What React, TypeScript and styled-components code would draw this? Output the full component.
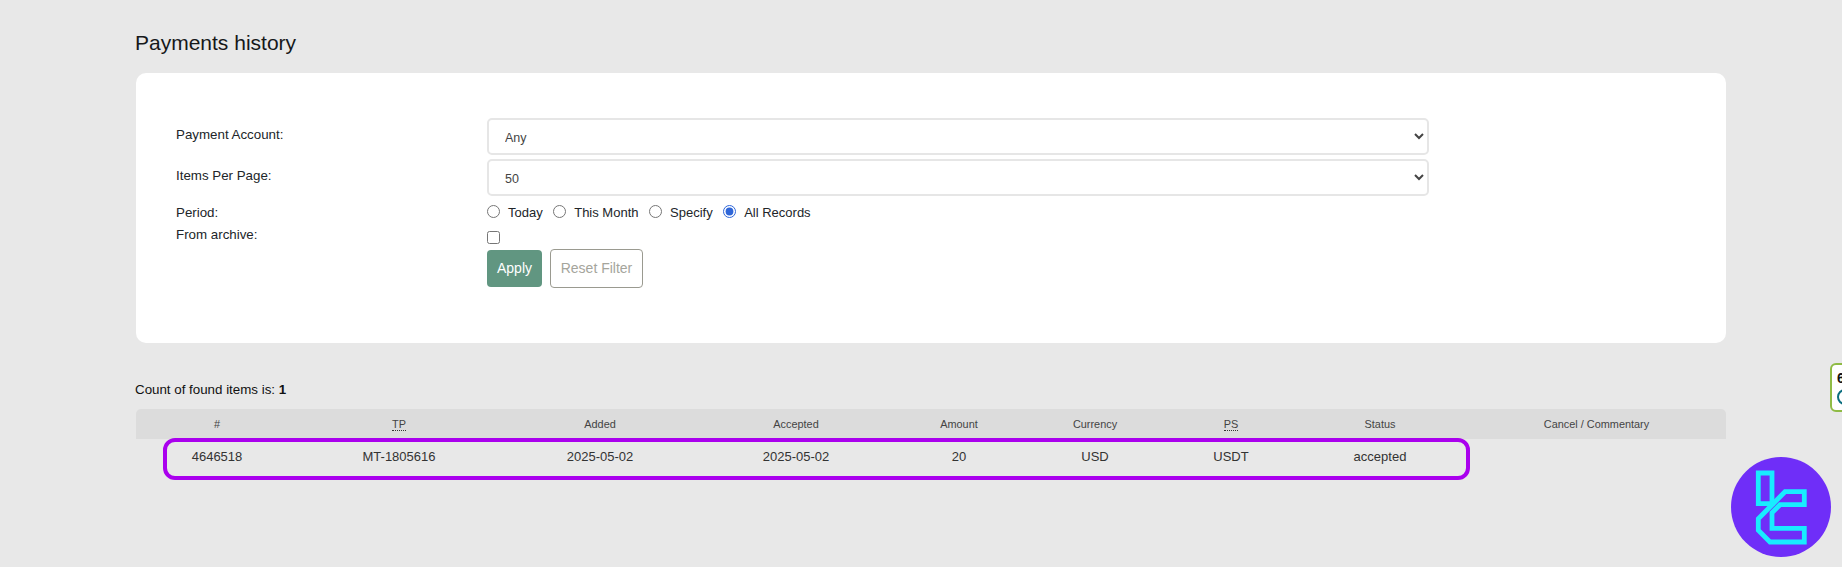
import styled, { createGlobalStyle } from 'styled-components'

const GlobalStyle = createGlobalStyle`
  html, body {
    margin: 0;
    height: 100%;
    background: #e8e8e8;
  }
  body {
    font-family: "Liberation Sans", Arial, sans-serif;
    color: #212529;
    overflow: hidden;
  }
`

const columns = [
  { title: '#', width: 162 },
  { title: 'TP', width: 202, abbr: true },
  { title: 'Added', width: 200 },
  { title: 'Accepted', width: 192 },
  { title: 'Amount', width: 134 },
  { title: 'Currency', width: 138 },
  { title: 'PS', width: 134, abbr: true },
  { title: 'Status', width: 164 },
  { title: 'Cancel / Commentary', width: 264 },
]

const row = ['4646518', 'MT-1805616', '2025-05-02', '2025-05-02', '20', 'USD', 'USDT', 'accepted', '']

const App = () => {
  return (
    <>
      <GlobalStyle />
      <Page>
        <Title>Payments history</Title>
        <Card>
          <FormRow>
            <Label>Payment Account:</Label>
            <Select defaultValue="any">
              <option value="any">Any</option>
            </Select>
          </FormRow>
          <FormRow>
            <Label>Items Per Page:</Label>
            <Select defaultValue="50">
              <option value="50">50</option>
            </Select>
          </FormRow>
          <PeriodRow>
            <Label>Period:</Label>
            <Radios>
              <RadioLabel><Radio name="period" />Today</RadioLabel>
              <RadioLabel><Radio name="period" />This Month</RadioLabel>
              <RadioLabel><Radio name="period" />Specify</RadioLabel>
              <RadioLabel><Radio name="period" defaultChecked />All Records</RadioLabel>
            </Radios>
          </PeriodRow>
          <ArchiveRow>
            <Label>From archive:</Label>
            <div>
              <Checkbox />
              <Buttons>
                <ApplyButton>Apply</ApplyButton>
                <ResetButton>Reset Filter</ResetButton>
              </Buttons>
            </div>
          </ArchiveRow>
        </Card>
        <Count>Count of found items is: <b>1</b></Count>
        <TableWrap>
          <Table>
            <colgroup>
              {columns.map((c) => (
                <col key={c.title} width={c.width} />
              ))}
            </colgroup>
            <thead>
              <tr>
                {columns.map((c) => (
                  <Th key={c.title}>{c.abbr ? <Abbr>{c.title}</Abbr> : c.title}</Th>
                ))}
              </tr>
            </thead>
            <tbody>
              <tr>
                {row.map((v, i) => (
                  <Td key={i}>{v}</Td>
                ))}
              </tr>
            </tbody>
          </Table>
          <Highlight />
        </TableWrap>
      </Page>
      <SideWidget>
        <WidgetDigit>6</WidgetDigit>
        <WidgetIcon />
      </SideWidget>
      <Logo viewBox="0 0 100 100">
        <circle cx="50" cy="50" r="50" fill="#6f2ef8" />
        <g fill="none" stroke="#18ecff" strokeWidth="4.8" strokeLinejoin="miter">
          <path d="M27.3 16 H41 V46.7 H27.3 Z" />
          <path d="M54 34.7 H73.3 V47.7 H49 L41 55.7 V71.3 H73.3 V85 H39 L27.3 73.3 V61.7 Z" />
        </g>
      </Logo>
    </>
  )
}

export default App

const Page = styled.div`
  padding: 32px 116px 0 135px;
`

const Title = styled.h1`
  margin: 0 0 19px;
  font-size: 21px;
  line-height: 22px;
  font-weight: 400;
  color: #16181a;
`

const Card = styled.div`
  margin-left: 1px;
  height: 270px;
  box-sizing: border-box;
  padding: 45px 40px 0;
  background: #fff;
  border-radius: 10px;
`

const FormRow = styled.div`
  display: grid;
  grid-template-columns: 311px 942px;
  height: 41px;
`

const Label = styled.div`
  font-size: 13.33px;
  line-height: 16px;
  padding-top: 9px;
`

const Select = styled.select`
  height: 37px;
  width: 100%;
  box-sizing: border-box;
  padding: 2px 12px 0;
  border: 2px solid #e6e6e6;
  border-radius: 5px;
  background: #fff;
  font-family: "Liberation Sans", Arial, sans-serif;
  font-size: 12.5px;
  color: #444;
`

const PeriodRow = styled.div`
  display: grid;
  grid-template-columns: 311px 1fr;
  margin-top: 1px;
  height: 22px;
  ${Label} {
    padding-top: 4px;
  }
`

const Radios = styled.div`
  display: flex;
  align-items: center;
  gap: 10.5px;
`

const RadioLabel = styled.label`
  display: flex;
  align-items: center;
  font-size: 13px;
`

const Radio = styled.input.attrs({ type: 'radio' })`
  margin: 0 8px 2px 0;
  width: 13px;
  height: 13px;
  accent-color: #2f66d8;
`

const ArchiveRow = styled.div`
  display: grid;
  grid-template-columns: 311px 1fr;
  ${Label} {
    padding-top: 4px;
  }
`

const Checkbox = styled.input.attrs({ type: 'checkbox' })`
  display: block;
  margin: 8px 0 5px;
  width: 13px;
  height: 13px;
`

const Buttons = styled.div`
  display: flex;
  align-items: center;
  gap: 8px;
`

const ApplyButton = styled.button`
  width: 55px;
  height: 37px;
  padding: 0 0 2px;
  border: 0;
  border-radius: 4px;
  background: #619681;
  color: #fff;
  font-family: "Liberation Sans", Arial, sans-serif;
  font-size: 14px;
`

const ResetButton = styled.button`
  width: 93px;
  height: 39px;
  padding: 0 0 2px;
  border: 1px solid #9a9a90;
  border-radius: 4px;
  background: #fff;
  color: #a5a59c;
  font-family: "Liberation Sans", Arial, sans-serif;
  font-size: 14px;
`

const Count = styled.div`
  margin-top: 39px;
  font-size: 13.33px;
  line-height: 16px;
  color: #111;
`

const TableWrap = styled.div`
  position: relative;
  margin: 11px 0 0 1px;
  width: 1590px;
`

const Table = styled.table`
  width: 1590px;
  table-layout: fixed;
  border-collapse: separate;
  border-spacing: 0;
`

const Th = styled.th`
  height: 30px;
  padding: 0;
  background: #dcdcdc;
  font-size: 10.9px;
  font-weight: 400;
  color: #444;
  &:first-child {
    border-top-left-radius: 5px;
  }
  &:last-child {
    padding-left: 5px;
    border-top-right-radius: 5px;
  }
`

const Abbr = styled.span`
  border-bottom: 1px dotted #333;
`

const Td = styled.td`
  height: 35px;
  padding: 0;
  text-align: center;
  font-size: 13px;
  color: #333;
`

const Highlight = styled.div`
  position: absolute;
  left: 27px;
  top: 29px;
  width: 1307px;
  height: 42px;
  box-sizing: border-box;
  border: 4px solid #aa00ee;
  border-radius: 12px;
`

const SideWidget = styled.div`
  position: fixed;
  left: 1830px;
  top: 363px;
  width: 20px;
  height: 49px;
  box-sizing: border-box;
  padding: 5px 0 0 5px;
  background: #fff;
  border: 2px solid #8fbb45;
  border-radius: 6px;
`

const WidgetDigit = styled.div`
  font-size: 14px;
  line-height: 16px;
  font-weight: 700;
  color: #111;
`

const WidgetIcon = styled.div`
  margin-top: 3px;
  width: 16px;
  height: 16px;
  box-sizing: border-box;
  border: 2px solid #0b6e7f;
  border-radius: 50%;
`

const Logo = styled.svg`
  position: fixed;
  left: 1731px;
  top: 457px;
  width: 100px;
  height: 100px;
`
